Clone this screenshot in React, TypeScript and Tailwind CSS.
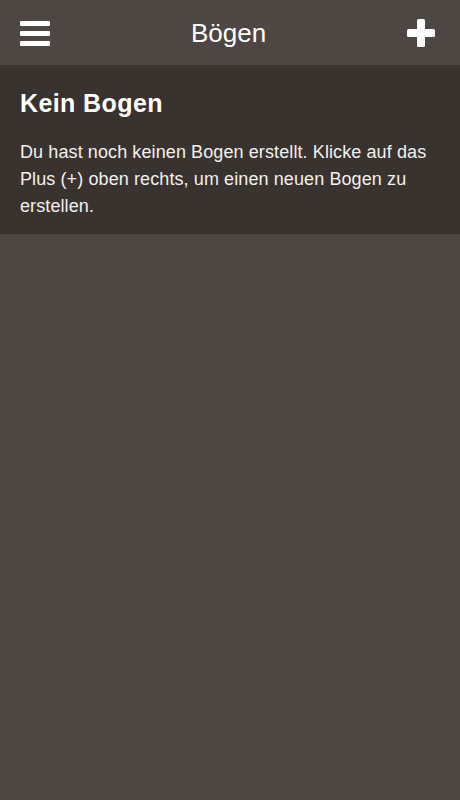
import React from 'react';

function MenuIcon() {
  return (
    <div className="flex w-[30px] flex-col gap-[5px]">
      <span className="block h-[5px] w-full rounded-[1px] bg-white" />
      <span className="block h-[5px] w-full rounded-[1px] bg-white" />
      <span className="block h-[5px] w-full rounded-[1px] bg-white" />
    </div>
  );
}

function PlusIcon() {
  return (
    <svg width="28" height="28" viewBox="0 0 28 28">
      <rect x="10" y="0" width="8" height="28" rx="1.5" fill="#fff" />
      <rect x="0" y="10" width="28" height="8" rx="1.5" fill="#fff" />
    </svg>
  );
}

export default function App() {
  return (
    <div className="min-h-[800px] bg-[#4d4642] font-['Liberation_Sans',Arial,sans-serif] text-white">
      <header className="flex h-[65px] items-center justify-between pl-5 pr-[25px]">
        <button className="pt-[1px]">
          <MenuIcon />
        </button>
        <h1 className="text-[26px] leading-none">Bögen</h1>
        <button className="pt-[1px]">
          <PlusIcon />
        </button>
      </header>
      <section className="bg-[#39332f] px-5 pt-[23px] pb-[14px]">
        <h2 className="text-[25px] font-bold leading-[30px] tracking-[0.4px]">Kein Bogen</h2>
        <p className="mt-[21px] text-[18px] leading-[27px] tracking-[0.1px] text-[#f2f0ee]">
          Du hast noch keinen Bogen erstellt. Klicke auf das Plus (+) oben rechts, um einen neuen Bogen zu erstellen.
        </p>
      </section>
    </div>
  );
}
